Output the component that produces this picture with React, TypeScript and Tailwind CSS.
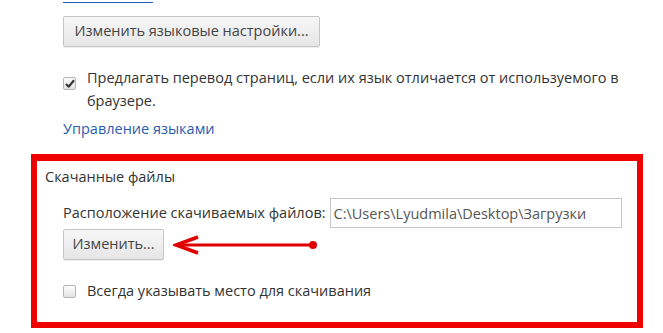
import React from 'react';

const font = { fontFamily: '"Open Sans", "Noto Sans", sans-serif' };

function GrayButton({ children, className = '' }: { children: React.ReactNode; className?: string }) {
  return (
    <button
      className={`flex items-center justify-center whitespace-nowrap h-[31px] rounded-[2px] border border-[#c5c5c5] bg-gradient-to-b from-[#f7f7f7] to-[#e6e6e6] text-[14.5px] text-[#444] leading-none shadow-[0_1px_0_rgba(0,0,0,0.06)] ${className}`}
    >
      {children}
    </button>
  );
}

function CheckBox({ checked }: { checked?: boolean }) {
  return (
    <span className="w-[13px] h-[13px] rounded-[2px] border border-[#b5b5b5] bg-gradient-to-b from-[#fdfdfd] to-[#e4e4e4] flex items-center justify-center shrink-0">
      {checked && (
        <svg width="10" height="9" viewBox="0 0 10 9">
          <path d="M1 5 L3.8 7.6 L9 1.2" fill="none" stroke="#333" strokeWidth="2.2" strokeLinejoin="round" />
        </svg>
      )}
    </span>
  );
}

export default function App() {
  return (
    <div className="w-[663px] h-[333px] bg-white overflow-hidden text-[#333] text-[14.5px]" style={font}>
      <div className="pl-[63px]">
        <a className="block w-[90px] h-[3px] border-b border-[#2a5db0]" />
        <GrayButton className="mt-[13px] w-[257px] h-[30px]">Изменить языковые настройки...</GrayButton>

        <div className="mt-[19px] flex items-start">
          <div className="pt-[11px] w-[24px]">
            <CheckBox checked />
          </div>
          <p className="leading-[23px] whitespace-nowrap">
            Предлагать перевод страниц, если их язык отличается от используемого в
            <br />
            браузере.
          </p>
        </div>

        <a className="block mt-[5px] text-[#2a5db0] leading-[23px]">Управление языками</a>
      </div>

      <div className="ml-[31px] mt-[14px] w-[612px] h-[174px] border-[6px] border-t-[7px] border-[#f10000] pl-[8px] pt-[5px]">
        <div className="leading-[22px]">Скачанные файлы</div>

        <div className="pl-[18px] mt-[10px]">
          <div className="flex items-center h-[30px]">
            <span className="mr-[4px] whitespace-nowrap">Расположение скачиваемых файлов:</span>
            <input
              readOnly
              value="C:\Users\Lyudmila\Desktop\Загрузки"
              className="w-[292px] h-[30px] border border-[#c8c8c8] px-[3px] text-[14.5px] text-[#555] outline-none"
              style={font}
            />
          </div>

          <div className="flex items-center mt-[1px]">
            <GrayButton className="w-[101px]">Изменить...</GrayButton>
            <svg width="150" height="22" viewBox="0 0 150 22" className="ml-[9px]">
              <path d="M3 11 L140 11" stroke="#e00000" strokeWidth="3" />
              <path d="M25 3 L3 11 L25 19" fill="none" stroke="#e00000" strokeWidth="3.5" strokeLinejoin="miter" />
              <circle cx="140" cy="11" r="4" fill="#e00000" />
            </svg>
          </div>

          <div className="flex items-center mt-[20px]">
            <div className="w-[24px]">
              <CheckBox />
            </div>
            <span className="leading-[22px]">Всегда указывать место для скачивания</span>
          </div>
        </div>
      </div>
    </div>
  );
}
